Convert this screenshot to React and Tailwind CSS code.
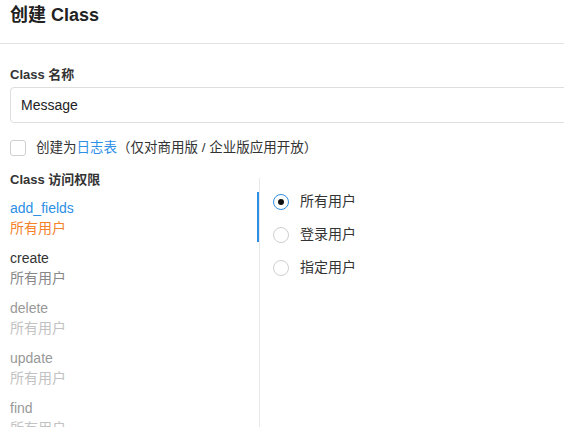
import * as React from "react"

const ops = [
  { name: "add_fields", who: "所有用户", state: "active" },
  { name: "create", who: "所有用户", state: "normal" },
  { name: "delete", who: "所有用户", state: "muted" },
  { name: "update", who: "所有用户", state: "muted" },
  { name: "find", who: "所有用户", state: "muted" },
]

const choices = ["所有用户", "登录用户", "指定用户"]

function Radio({ checked }) {
  return (
    <span
      className={
        "w-4 h-4 rounded-full border flex items-center justify-center shrink-0 " +
        (checked ? "border-[#2d8fe6]" : "border-[#cfcfcf]")
      }
    >
      {checked && <span className="w-[6px] h-[6px] rounded-full bg-[#111]" />}
    </span>
  )
}

export default function App() {
  const font = { fontFamily: '"Liberation Sans", "Noto Sans CJK SC", sans-serif' }

  return (
    <div className="w-[564px] h-[427px] overflow-hidden bg-white text-[#333]" style={font}>
      <div className="w-[640px]">
        <div className="h-[44px] pt-[5px] px-[10px] border-b border-[#e3e3e3]">
          <h1 className="text-[18px] leading-[20px] font-bold text-[#222]">创建 Class</h1>
        </div>

        <div className="px-[10px]">
          <div className="pt-[23px] text-[13px] leading-[16px] font-bold">Class 名称</div>
          <div className="mt-[4px] h-[36px] border border-[#dedede] rounded-[4px] flex items-center px-[10px] text-[14px] text-[#222]">
            Message
          </div>

          <label className="mt-[17px] h-[16px] flex items-center gap-[10px]">
            <span className="w-4 h-4 rounded-[3px] border border-[#cfcfcf] bg-white" />
            <span className="text-[13.5px] leading-[16px] text-[#333]">
              创建为<span className="text-[#2d8fe6]">日志表</span>（仅对商用版 / 企业版应用开放）
            </span>
          </label>

          <div className="mt-[16px] flex">
            <div className="w-[249px] shrink-0">
              <div className="h-[16px] text-[13px] leading-[16px] font-bold">Class 访问权限</div>
              <div className="mt-[4px]">
                {ops.map((op) => (
                  <div
                    key={op.name}
                    className={
                      "h-[50px] pt-[6px] text-[14px] leading-[20px] " +
                      (op.state === "active" ? "border-r-2 border-[#2d8fe6]" : "")
                    }
                  >
                    <div
                      className={
                        op.state === "active"
                          ? "text-[#2d8fe6]"
                          : op.state === "normal"
                          ? "text-[#333]"
                          : "text-[#999]"
                      }
                    >
                      {op.name}
                    </div>
                    <div
                      className={
                        op.state === "active"
                          ? "text-[#f5822a]"
                          : op.state === "normal"
                          ? "text-[#888]"
                          : "text-[#c2c2c2]"
                      }
                    >
                      {op.who}
                    </div>
                  </div>
                ))}
              </div>
            </div>

            <div className="mt-[6px] border-l border-[#e8e8e8] flex-1 pl-[13px] pt-[7px] h-[260px]">
              {choices.map((c, i) => (
                <div key={c} className="h-[33px] flex items-center gap-[11px] text-[14px] text-[#333]">
                  <Radio checked={i === 0} />
                  <span>{c}</span>
                </div>
              ))}
            </div>
          </div>
        </div>
      </div>
    </div>
  )
}
